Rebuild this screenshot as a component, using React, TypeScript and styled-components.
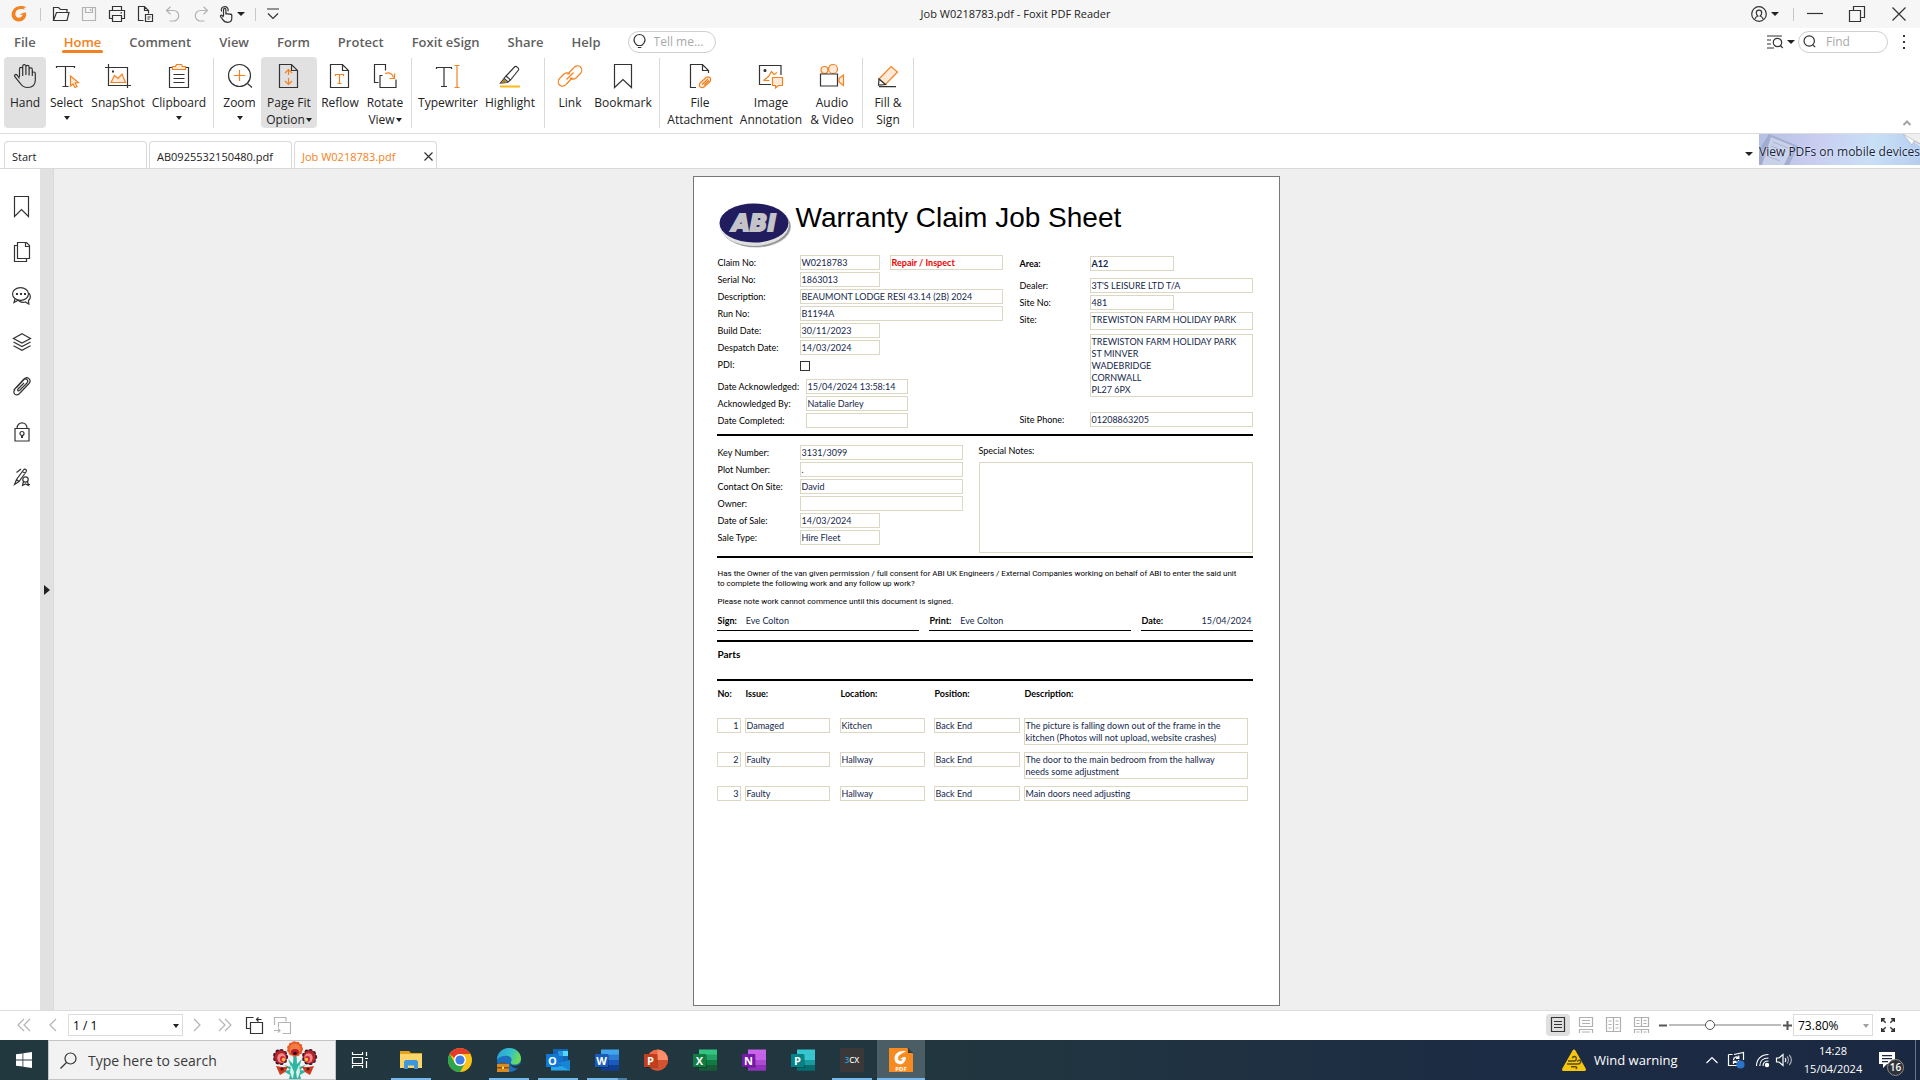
import React from "react";
import styled, { createGlobalStyle, css } from "styled-components";

const ORANGE = "#f58220";
const INK = "#333333";
const UI = '"Open Sans", "Noto Sans", sans-serif';
const DOC = 'Lato, "Open Sans", sans-serif';

const Global = createGlobalStyle`
  *, *::before, *::after { box-sizing: border-box; }
  html, body { margin: 0; padding: 0; }
  body { font-family: ${UI}; font-size: 11px; color: #222; background: #fff; }
  button, input, select { font: inherit; color: inherit; margin: 0; }
  button { border: 0; background: none; padding: 0; }
  dl, dd, dt, p, h1, h2, address { margin: 0; font-style: normal; }
`;

/* ---------- shared ---------- */

const Svg = styled.svg<{ $ink?: string }>`
  display: block;
  flex: none;
  overflow: visible;
  fill: none;
  stroke: ${(p) => p.$ink || INK};
  stroke-width: 1.2;
`;

type GlyphProps = { w: number; h?: number; children: React.ReactNode; color?: string };
const Glyph = ({ w, h = w, children, color }: GlyphProps) => (
  <Svg width={w} height={h} viewBox={`0 0 ${w} ${h}`} $ink={color} aria-hidden="true">
    {children}
  </Svg>
);

const Caret = styled.span<{ $tone?: string }>`
  display: inline-block;
  flex: none;
  border: 4px solid transparent;
  border-bottom: 0;
  border-top-color: ${(p) => p.$tone || "#222"};
`;

const Shell = styled.div`
  min-height: 100vh;
  display: flex;
  flex-direction: column;
`;

/* ---------- title bar ---------- */

const TitleBar = styled.header`
  height: 28px;
  display: flex;
  align-items: center;
  background: #f6f6f6;
`;
const QuickTools = styled.div`
  display: flex;
  align-items: center;
  padding-left: 7px;
`;
const LogoBox = styled.span`
  width: 24px;
  display: flex;
  justify-content: center;
`;
const ToolButton = styled.button<{ $w?: number }>`
  width: ${(p) => p.$w || 28}px;
  height: 28px;
  display: flex;
  align-items: center;
  justify-content: center;
  gap: 4px;
`;
const BarLine = styled.span<{ $m?: string }>`
  width: 1px;
  height: 13px;
  margin: ${(p) => p.$m || "0"};
  background: #c8c8c8;
`;
const WindowTitle = styled.h1`
  flex: 1;
  padding-bottom: 1px;
  text-align: center;
  font-size: 11px;
  font-weight: 400;
`;
const WindowTools = styled.div`
  display: flex;
  align-items: center;
`;

/* ---------- menu ---------- */

const MenuBar = styled.div`
  height: 29px;
  display: flex;
  align-items: center;
  padding-bottom: 2px;
`;
const Menu = styled.nav`
  display: flex;
  flex: 1;
  align-items: center;
`;
const MenuItem = styled.button<{ $on?: boolean }>`
  position: relative;
  height: 27px;
  padding: 0 14px;
  font-size: 13px;
  font-weight: 600;
  color: ${(p) => (p.$on ? ORANGE : "#5f5f5f")};
  ${(p) =>
    p.$on &&
    css`
      &::after {
        content: "";
        position: absolute;
        left: 12px;
        right: 12px;
        bottom: 2px;
        height: 3px;
        border-radius: 2px;
        background: ${ORANGE};
      }
    `}
`;
const Pill = styled.label<{ $w: number; $gap: number; $lead?: number }>`
  width: ${(p) => p.$w}px;
  height: 22px;
  margin-left: ${(p) => p.$lead || 0}px;
  display: flex;
  align-items: center;
  gap: ${(p) => p.$gap}px;
  padding: 0 4px;
  border: 1px solid #cfcfcf;
  border-radius: 11px;
  input {
    flex: 1;
    min-width: 0;
    height: 18px;
    padding: 0;
    border: 0;
    outline: 0;
    background: none;
    font-size: 12px;
  }
  input::placeholder {
    color: #a9a9a9;
  }
`;

/* ---------- ribbon ---------- */

const Ribbon = styled.div`
  display: flex;
  align-items: stretch;
  height: 77px;
  padding: 0 8px 5px 4px;
  border-bottom: 1px solid #dcdcdc;
`;
const RibbonButton = styled.button<{ $w: number; $on?: boolean }>`
  width: ${(p) => p.$w}px;
  display: flex;
  flex-direction: column;
  align-items: center;
  justify-content: flex-start;
  padding-top: 7px;
  border-radius: 4px;
  background: ${(p) => (p.$on ? "#e1e1e1" : "transparent")};
  line-height: 17px;
  font-size: 12px;
  white-space: nowrap;
  ${Svg} {
    margin-bottom: 6px;
  }
  ${Caret} {
    border-left-width: 3px;
    border-right-width: 3px;
    margin: 5px 0 0;
  }
`;
const InlineCaretLine = styled.span`
  display: flex;
  align-items: center;
  gap: 1px;
  ${Caret} {
    margin: 0;
  }
`;
const RibbonLine = styled.span`
  width: 1px;
  margin: 1px 4px 0;
  background: #d9d9d9;
`;
const Collapse = styled.button`
  margin: auto 0 0 auto;
  height: 12px;
`;

/* ---------- document tabs ---------- */

const TabStrip = styled.div`
  display: flex;
  align-items: flex-end;
  height: 35px;
  gap: 2px;
  padding-left: 4px;
  border-bottom: 1px solid #d9d9d9;
`;
const DocTab = styled.button<{ $on?: boolean }>`
  width: 143px;
  height: 27px;
  display: flex;
  align-items: center;
  justify-content: space-between;
  padding: 3px 3px 0 7px;
  border: 1px solid #d9d9d9;
  border-bottom: 0;
  border-radius: 4px 4px 0 0;
  color: ${(p) => (p.$on ? ORANGE : "#222")};
`;
const TabTail = styled.div`
  margin-left: auto;
  align-self: stretch;
  display: flex;
  align-items: center;
  gap: 6px;
`;
const Banner = styled.a`
  position: relative;
  width: 161px;
  height: 31px;
  margin-bottom: 3px;
  padding-top: 4px;
  display: flex;
  align-items: center;
  justify-content: center;
  overflow: hidden;
  background: linear-gradient(100deg, #b3c0e4 0%, #c9cdf0 35%, #c8e0f6 70%, #b7cdf0 100%);
  color: #15233d;
  font-size: 12px;
  text-decoration: none;
  white-space: nowrap;
  > svg {
    position: absolute;
    inset: 0;
  }
  > span {
    position: relative;
    text-shadow: 0 0 2px #fff;
  }
`;

/* ---------- workspace ---------- */

const Workspace = styled.div`
  flex: 1;
  display: flex;
`;
const SideRail = styled.aside`
  width: 40px;
  padding: 15px 0 0 3px;
  display: flex;
  flex-direction: column;
`;
const RailButton = styled.button`
  height: 45px;
  display: flex;
  align-items: center;
  justify-content: center;
`;
const PanelHandle = styled.button`
  width: 14px;
  display: flex;
  align-items: center;
  justify-content: center;
  background: #e1e1e1;
  border-right: 1px solid #dadada;
  span {
    border: 5px solid transparent;
    border-left: 6px solid #222;
    border-right: 0;
  }
`;
const Canvas = styled.main`
  flex: 1;
  display: flex;
  justify-content: center;
  padding: 7px 2px 4px 0;
  background: #efefef;
`;

/* ---------- PDF page ---------- */

const Paper = styled.article`
  width: 587px;
  min-height: 830px;
  padding: 23px 26px 0 23px;
  border: 1px solid #777;
  background: #fff;
  font-family: ${DOC};
  font-size: 9px;
  line-height: 12px;
  color: #000;
`;
const PaperHead = styled.div`
  display: flex;
  gap: 4px;
  height: 55px;
`;
const PaperTitle = styled.h2`
  font-family: "Liberation Sans", Arial, sans-serif;
  font-size: 28px;
  line-height: 36px;
  font-weight: 400;
`;
const Split = styled.div<{ $cols: string }>`
  display: grid;
  grid-template-columns: ${(p) => p.$cols};
  gap: 16px;
`;
const Rows = styled.dl<{ $top?: number }>`
  display: flex;
  flex-direction: column;
  gap: 2px;
  margin-top: ${(p) => p.$top || 0}px;
`;
const Row = styled.div<{ $label: number; $h?: number; $gap?: number }>`
  display: grid;
  grid-template-columns: ${(p) => p.$label}px 1fr;
  min-height: ${(p) => p.$h || 15}px;
  margin-bottom: ${(p) => p.$gap || 0}px;
  dt {
    padding: 2px 0 0 1px;
    white-space: nowrap;
  }
`;
const Values = styled.dd`
  display: flex;
  gap: 10px;
`;
const Box = styled.span<{ $w?: number; $h?: number; $end?: boolean; $pad?: number }>`
  display: block;
  ${(p) => (p.$w ? `width: ${p.$w}px;` : "flex: 1;")}
  min-height: ${(p) => p.$h || 15}px;
  padding: 1px ${(p) => p.$pad || 1}px 0 1px;
  border: 1px solid #dbd7c2;
  color: #14274a;
  text-align: ${(p) => (p.$end ? "right" : "left")};
`;
const Red = styled.strong`
  color: #f00000;
`;
const PdiCheck = styled.input`
  appearance: none;
  display: block;
  width: 10px;
  height: 10px;
  margin-top: 4px;
  border: 1px solid #333;
  background: #fff;
`;
const Rule = styled.hr<{ $top: number }>`
  height: 2px;
  margin: ${(p) => p.$top}px 0 0;
  border: 0;
  background: #000;
`;
const Consent = styled.div`
  padding: 11px 0 0 1px;
  font-family: Roboto, "Open Sans", sans-serif;
  font-size: 8px;
  line-height: 10px;
  p + p {
    margin-top: 8px;
  }
`;
const Signatures = styled.div`
  display: grid;
  grid-template-columns: 202px 202px 112px;
  gap: 10px;
  padding-top: 6px;
`;
const SignLine = styled.div<{ $spread?: boolean }>`
  display: flex;
  gap: 9px;
  justify-content: ${(p) => (p.$spread ? "space-between" : "flex-start")};
  height: 18px;
  padding: 0 1px;
  border-bottom: 1px solid #000;
  line-height: 15px;
  span {
    color: #14274a;
  }
`;
const PartsTitle = styled.h2`
  padding: 6px 0 0 1px;
  font-size: 10px;
  line-height: 13px;
`;
const PartsTable = styled.table`
  width: 535px;
  table-layout: fixed;
  border-spacing: 0;
  th {
    height: 37px;
    padding: 7px 0 0 1px;
    text-align: left;
    vertical-align: top;
    font-size: 9px;
  }
  td {
    padding: 0 0 7px;
    vertical-align: top;
  }
`;

/* ---------- status bar ---------- */

const StatusBar = styled.footer`
  height: 30px;
  display: flex;
  align-items: center;
  border-top: 1px solid #dcdcdc;
  background: #fff;
  padding: 0 18px 1px 10px;
`;
const StatusGroup = styled.div<{ $end?: boolean }>`
  display: flex;
  align-items: center;
  margin-left: ${(p) => (p.$end ? "auto" : "0")};
`;
const StatusButton = styled.button<{ $w: number; $on?: boolean }>`
  width: ${(p) => p.$w}px;
  height: 22px;
  display: flex;
  align-items: center;
  justify-content: center;
  border-radius: 4px;
  background: ${(p) => (p.$on ? "#dfdfdf" : "transparent")};
`;
const SelectWrap = styled.label<{ $w: number }>`
  position: relative;
  width: ${(p) => p.$w}px;
  height: 22px;
  select {
    appearance: none;
    width: 100%;
    height: 22px;
    padding: 0 4px;
    border: 1px solid #dcdcdc;
    border-radius: 0;
    background: #fff;
    font-size: 12px;
    color: #000;
  }
  ${Caret} {
    position: absolute;
    right: 4px;
    top: 10px;
    border-left-width: 3px;
    border-right-width: 3px;
  }
`;
const Slider = styled.input`
  appearance: none;
  width: 112px;
  height: 12px;
  background: linear-gradient(#bcbcbc, #bcbcbc) center / 100% 2px no-repeat;
  &::-webkit-slider-thumb {
    appearance: none;
    width: 10px;
    height: 10px;
    border: 1px solid #555;
    border-radius: 50%;
    background: #fff;
  }
`;

/* ---------- taskbar ---------- */

const TaskBar = styled.div`
  height: 40px;
  display: flex;
  background: linear-gradient(90deg, #22383f 0%, #21363f 50%, #1c2c44 78%, #1b2841 100%);
  color: #fff;
`;
const TaskButton = styled.button<{ $on?: boolean; $lead?: number }>`
  position: relative;
  width: 48px;
  margin-left: ${(p) => p.$lead || 0}px;
  display: flex;
  align-items: center;
  justify-content: center;
  background: ${(p) => (p.$on ? "#4b5e66" : "transparent")};
`;
const Running = styled.i<{ $full?: boolean; $multi?: boolean }>`
  position: absolute;
  bottom: 0;
  left: ${(p) => (p.$full ? 0 : 4)}px;
  right: ${(p) => (p.$full ? 0 : 4)}px;
  height: 2px;
  background: ${(p) =>
    p.$multi ? "linear-gradient(90deg, #76b9ed 31px, #4d7fa6 31px)" : "#76b9ed"};
`;
const SearchBox = styled.label`
  width: 288px;
  display: flex;
  align-items: center;
  gap: 11px;
  padding: 0 18px 0 11px;
  border: 1px solid #c4c4c4;
  background: #f2f2f2;
  input {
    flex: 1;
    min-width: 0;
    border: 0;
    outline: 0;
    padding: 0;
    background: none;
    font-size: 14px;
  }
  input::placeholder {
    color: #3a3a3a;
  }
`;
const Tray = styled.div`
  margin-left: auto;
  display: flex;
  align-items: center;
  padding-right: 4px;
`;
const Weather = styled.button`
  display: flex;
  align-items: center;
  gap: 8px;
  width: 144px;
  height: 40px;
  font-size: 13px;
  color: #fff;
  white-space: nowrap;
`;
const TrayButton = styled.button<{ $w: number }>`
  width: ${(p) => p.$w}px;
  height: 40px;
  display: flex;
  align-items: center;
  justify-content: center;
  color: #fff;
`;
const Clock = styled.button`
  width: 70px;
  color: #fff;
  line-height: 18px;
  text-align: center;
`;
const Notice = styled.button`
  position: relative;
  width: 48px;
  height: 40px;
  padding-left: 11px;
  border-right: 1px solid #6d7588;
`;
const Badge = styled.span`
  position: absolute;
  left: 19px;
  top: 19px;
  width: 17px;
  height: 17px;
  border: 1px solid #8d8d8d;
  border-radius: 50%;
  background: #2f3338;
  color: #fff;
  font-size: 10px;
  font-weight: 600;
  line-height: 15px;
  text-align: center;
`;

/* ---------- drawings ---------- */

const NoStroke = styled(Svg)`
  stroke: none;
  stroke-width: 0;
`;

const FoxitMark = () => (
  <NoStroke width="16" height="16" viewBox="0 0 16 16" aria-hidden="true">
    <path
      fill={ORANGE}
      d="M15.5 1.2C11.5-.6 5.600-.6 2.500 3.200c-3 3.600-2.200 9 1.500 11.300 4 2.400 9.200.5 10.800-3.700.5-1.500.5-3 .1-4.300-2.200.4-4.600.6-6 2.300 1.100-.2 1.900-.1 2.800 0-.9 2.700-3.600 3.700-5.700 2.400-2-1.300-2.200-4.200-.7-6.200C7.200 2.400 11.600 2.800 14.200 3.600 13.700 3 13 2.500 12.300 2.100c1.100-.4 2.200-.6 3.200-.9z"
    />
  </NoStroke>
);

const PageOutline = <path d="M2.500 .5h12l6 6v17h-18zM14.500 .5v6h6" />;

const icons = {
  open: (
    <Glyph w={18} h={16}>
      <path d="M1.500 14.500V1.500h5l2 2h6.500v3M1.500 14.500l3-8h12.500l-2 8z" />
    </Glyph>
  ),
  save: (
    <Glyph w={16} color="#b3b3b3">
      <path d="M1.500 1.500h13v13h-13zM4.500 1.500v5h7v-5M9.500 3v2" />
    </Glyph>
  ),
  print: (
    <Glyph w={18} h={16}>
      <path d="M4.500 4.500v-4h9v4M4.500 12.500h-3v-8h15v8h-3M4.500 9.500h9v6h-9zM12.500 6.800h1.500" />
    </Glyph>
  ),
  convert: (
    <Glyph w={18} h={17}>
      <path d="M7.500 14.500h-5v-14h6l4 4v3M8.500 .5v4h4M9.500 8.500h7v7h-7zM11.500 11h3M11.500 13h2" />
    </Glyph>
  ),
  undo: (
    <Glyph w={16} color="#b3b3b3">
      <path d="M5.500 .8l-4 3.700 4 3.700M1.500 4.500h7a5 5 0 0 1 0 10.500h-4" />
    </Glyph>
  ),
  redo: (
    <Glyph w={16} color="#b3b3b3">
      <path d="M10.500 .8l4 3.700-4 3.700M14.500 4.500h-7a5 5 0 0 0 0 10.500h4" />
    </Glyph>
  ),
  touch: (
    <Glyph w={14} h={17}>
      <path d="M4.500 10V3.500a1.200 1.200 0 0 1 2.400 0V8.500c0-1.500 2.200-1.300 2.200.2 0-1.400 2-1.200 2 .3 0-1.200 1.700-1 1.700.3v3c0 2.500-1.300 4-4 4-2.800 0-4-1-5-2.700L1.500 10.500c-.4-1.200.8-1.700 1.600-1L4.500 11M2.700 5.500C1.300 2.500 3.500.7 5.700.7s4.200 1.700 3.200 4.500" />
    </Glyph>
  ),
  customize: (
    <Glyph w={14} h={12}>
      <path d="M1 1h12M2 5.500l5 5 5-5" />
    </Glyph>
  ),
  user: (
    <Glyph w={16}>
      <circle cx="8" cy="8" r="7.300" />
      <path d="M4 13c.3-2 1.500-2.500 2.800-3-1-.8-1.500-2-1.500-3.200C5.300 5.200 6.400 4.200 8 4.200s2.700 1 2.700 2.600c0 1.300-.5 2.400-1.500 3.200 1.300.5 2.500 1 2.800 3" />
    </Glyph>
  ),
  minimise: (
    <Glyph w={16}>
      <path d="M0 7.500h16" />
    </Glyph>
  ),
  restore: (
    <Glyph w={16}>
      <path d="M.5 4.500h11v11h-11zM4.500 4.500v-4h11v11h-4" />
    </Glyph>
  ),
  close: (
    <Glyph w={14}>
      <path d="M.5.5l13 13M13.500.5l-13 13" />
    </Glyph>
  ),
  bulb: (
    <Glyph w={13} h={15}>
      <path d="M4.500 11.500C2.500 10 1 8.500 1 6a5.500 5.500 0 0 1 11 0c0 2.500-1.500 4-3.500 5.500zM4.800 13.500h3.500" />
    </Glyph>
  ),
  magnifier: (
    <Glyph w={13}>
      <circle cx="6.200" cy="6" r="5.200" />
      <path d="M9.800 9.800l2.400 2.400" />
    </Glyph>
  ),
  listSearch: (
    <Glyph w={16} h={14}>
      <path d="M0 1h15M0 5h4M0 9h4M0 13h7" />
      <circle cx="10.500" cy="7.500" r="4.200" />
      <path d="M13.500 10.500l2.200 2.500" />
    </Glyph>
  ),
};

const O = { stroke: ORANGE };
const OF = { stroke: ORANGE, fill: "#fdeadb" };

const ribbonIcons = {
  hand: (
    <Glyph w={24}>
      <path d="M6.500 13V5a1.600 1.600 0 0 1 3.200 0v7M9.700 5V2.200a1.600 1.600 0 0 1 3.200 0V11M12.900 3a1.600 1.600 0 0 1 3.200 0v8.500M16.100 5.500a1.600 1.600 0 0 1 3.200 0V12M19.300 9.500c0-2 3-2 3 0V16c0 4.800-2.500 7.500-7.500 7.500-4.200 0-6-1.300-7.800-4.500L1.700 12.500c-.8-1.600 1-2.800 2.300-1.500l2.500 3.500" />
    </Glyph>
  ),
  select: (
    <Glyph w={24}>
      <path d="M1.500 4V2.500h18V4M10.500 2.500v20M7.500 22.500h6" />
      <path {...OF} d="M15.500 12v10l2.500-2 2 3.500 2-1-1.800-3.500 3.300-.5z" />
    </Glyph>
  ),
  snapshot: (
    <Glyph w={26} h={24}>
      <path d="M3.500 0v21.500H26M0 3.500h22.500V24" />
      <path {...OF} d="M6 18.500l3.500-7 3.500 3 4-4.500 3.500 8.500z" />
      <path d="M7 7.500h2" strokeWidth="2" />
    </Glyph>
  ),
  clipboard: (
    <Glyph w={24}>
      <path d="M5.500 3.500h-3v20h19v-20h-3M6.500 10.500h11M6.500 14.500h11M6.500 18.500h11" />
      <path {...OF} d="M5.500 2.500h3l1-2h5l1 2h3v3h-13z" />
    </Glyph>
  ),
  zoom: (
    <Glyph w={24}>
      <circle cx="11.500" cy="11.500" r="11" />
      <path d="M19.500 19.500l4.500 4" />
      <path {...O} d="M11.500 6v11M6 11.500h11" />
    </Glyph>
  ),
  pageFit: (
    <Glyph w={24}>
      {PageOutline}
      <path {...O} d="M11.500 6v5M11.500 14v6M8 9l3.500-3.500L15 9M8 17l3.500 3.500L15 17" />
    </Glyph>
  ),
  reflow: (
    <Glyph w={24}>
      {PageOutline}
      <path {...O} d="M7.500 12v-1.500h8V12M11.500 10.500v9M9.500 19.500h4" />
    </Glyph>
  ),
  rotate: (
    <Glyph w={24}>
      <path d="M5.500 18.500h-4V.5h11v6M9.500 11.500h-2.500v12h16v-8" />
      <path {...O} d="M12 9.500c4-1.500 7 0 8.500 4M21.500 9.500v5h-5" />
    </Glyph>
  ),
  typewriter: (
    <Glyph w={24}>
      <path d="M.5 5V3.500h15V5M8 3.500v19M5 22.500h6" />
      <path {...O} d="M18.500 1.500h5M18.500 23.500h5M21 1.500v22" />
    </Glyph>
  ),
  highlight: (
    <Glyph w={24}>
      <path d="M8 12L17 2.500c1-.8 4.500 2 3.500 3.500L12.500 16M8 12l4.500 4-2.500 2-4-3.500zM6 14.500L2.500 19l7-.5" />
      <path stroke="none" fill="#b07a1c" d="M2.500 19l3.500-3.500 3 2.700z" />
      <path stroke="#fdb813" strokeWidth="2" d="M2 22.500h20" />
    </Glyph>
  ),
  link: (
    <Glyph w={24} color={ORANGE}>
      <path d="M9.500 10.500l6-6.500c2-2.500 5-3 7-1s1.500 5-.5 7l-4 4c-2 1.500-4 1.500-6 0M14.500 13.500l-6 6.500c-2 2.500-5 3-7 1s-1.500-5 .5-7l4-4c2-1.500 4-1.500 6 0" />
      <path d="M8.500 15.500l7-7" />
    </Glyph>
  ),
  bookmark: (
    <Glyph w={24}>
      <path d="M3.500 .5h17v23l-8.500-8-8.500 8z" />
    </Glyph>
  ),
  attachment: (
    <Glyph w={24}>
      <path d="M8 23.500H2.500V.5h12l6 6V9M14.500 .5v6h6" />
      <path {...OF} d="M12 19l6-5.500c3-2 6 1 4 4L16 23c-3 2-6-1-4-4zM14 20.500l6-5.500M16 21l5-4.500" />
    </Glyph>
  ),
  image: (
    <Glyph w={24}>
      <path d="M12 20.500H.5v-19h21.500V11" />
      <circle cx="6" cy="6.500" r="1" fill={INK} />
      <path {...O} d="M4.500 16.500l5-4 3-5 2.500 3 3-2M4.500 16.500h6" />
      <path {...OF} d="M13.500 13.500h10v8h-4l-3 2.500v-2.500h-3z" />
    </Glyph>
  ),
  video: (
    <Glyph w={24}>
      <circle {...OF} cx="4.500" cy="6" r="3.500" />
      <circle {...OF} cx="13" cy="5" r="4.500" />
      <path fill="#fff" d="M.5 10h17v12H.5z" />
      <path {...OF} d="M19 14.500l4.500-3.500v10.500L19 18z" />
    </Glyph>
  ),
  sign: (
    <Glyph w={24}>
      <path {...OF} d="M3 15L15 2.500 21.500 8 9.500 20.500z" />
      <path d="M3 15l-.5 6 7-.5zM3 22.700h17" />
    </Glyph>
  ),
};

const railIcons: [string, React.ReactNode][] = [
  ["Bookmarks", <Glyph w={18} h={22}><path d="M1.500 .5h14v20l-7-7-7 7z" /></Glyph>],
  ["Pages", <Glyph w={18} h={20}><path d="M4.500 3.500h-3v16h12v-3M4.500 .5h9l3 3v13h-12zM12.500 .5v4h4" /></Glyph>],
  ["Comments", (
    <Glyph w={20} h={20}>
      <ellipse cx="8.500" cy="7" rx="8" ry="6.300" />
      <path d="M3 12l-1 3.500L6.500 13M17 6c2 3 1.300 6-.5 7.500l.3 3.500-3.300-2c-3 .8-5.500 0-7-1.500" />
      <path strokeWidth="1.800" d="M4 7h2M8 7h2M12 7h2" />
    </Glyph>
  )],
  ["Layers", <Glyph w={18} h={18}><path d="M9 .7l8.500 4.800L9 10 .5 5.500zM.5 9L9 13.500 17.500 9M.5 12.700L9 17.300l8.500-4.600" /></Glyph>],
  ["Attachments", <Glyph w={18} h={19}><path d="M3.500 10.500l7-7.500c3-2.500 5.500.5 3.500 3L6.500 13.500c-1.500 1-2.500-.5-1.500-1.500L11 6M.8 13L11 2c3.500-3.500 8 1 5 4.500L6.500 16.500c-3.500 3.500-7.500-.5-4.500-4" /></Glyph>],
  ["Security", (
    <Glyph w={16} h={20}>
      <path d="M1 6.500h14v12.500H1zM3 6.500c0-7.500 10-7.500 10 0" />
      <circle cx="8" cy="11.500" r="2" />
      <path d="M8 13.500v2.500" strokeWidth="2" />
    </Glyph>
  )],
  ["Signatures", (
    <Glyph w={18} h={16}>
      <path d="M1.500 15.500l2-5 7-9.500c1.500-2 4 0 2.500 2L6 12.500zM3.500 10.500L6 12.500M3.500 3.500L8 0M9.500 2.500l3 2" />
      <circle cx="12.500" cy="10.500" r="2.700" />
      <path d="M10.500 12.500l-1 4 3-1.500 3 1.500-1-4M14 15.500h3" />
    </Glyph>
  )],
];

const AbiLogo = () => (
  <Svg width="75" height="48" viewBox="0 0 75 48" role="img" aria-label="ABI">
    <defs>
      <linearGradient id="rim" x1="0" y1="0" x2="0" y2="1">
        <stop offset="0" stopColor="#fafafa" />
        <stop offset="1" stopColor="#dedede" />
      </linearGradient>
    </defs>
    <g stroke="none">
      <ellipse cx="39" cy="27" rx="35" ry="20.500" fill="#c4c4c4" />
      <ellipse cx="38.500" cy="26" rx="35" ry="21" fill="#949494" />
      <ellipse cx="37" cy="24.500" rx="35" ry="21.500" fill="url(#rim)" />
      <ellipse cx="37" cy="23" rx="34.500" ry="19.500" fill="#201c5e" />
    </g>
    <text
      x="37"
      y="31"
      textAnchor="middle"
      fill="#c3c3c8"
      stroke="#c3c3c8"
      strokeWidth="2"
      fontFamily="DejaVu Sans, sans-serif"
      fontSize="23"
      fontWeight="700"
      fontStyle="italic"
    >
      ABI
    </text>
  </Svg>
);

const OfficeTile = ({ letter, tile, shades, round }: { letter: string; tile: string; shades: string[]; round?: boolean }) => (
  <NoStroke width="24" height="24" viewBox="0 0 24 24" aria-hidden="true">
    {round ? (
      <>
        <circle cx="13.500" cy="12" r="10.500" fill={shades[0]} />
        <path d="M13.500 1.500A10.500 10.500 0 0 1 24 12H13.500z" fill={shades[1]} />
        <path d="M3 12h21a10.500 10.500 0 0 1-21 0z" fill={shades[2]} />
      </>
    ) : (
      shades.map((c, i) => (
        <rect key={i} x="6" y={1.500 + i * (21 / shades.length)} width="18" height={21 / shades.length + 0.2} fill={c} />
      ))
    )}
    <rect x="1" y="7" width="13" height="13" fill="#000" opacity=".2" />
    <rect x="0" y="6" width="13" height="13" fill={tile} />
    <text x="6.500" y="16.500" textAnchor="middle" fill="#fff" fontFamily="Open Sans, sans-serif" fontWeight="700" fontSize="11">
      {letter}
    </text>
  </NoStroke>
);

const FolderIcon = () => (
  <NoStroke width="24" height="20" viewBox="0 0 24 20">
    <path fill="#e3a21a" d="M1 1h9l2 2h11v4H1z" />
    <path fill="#fbd568" d="M1 4h22v14H1z" />
    <path fill="#3d97dd" d="M5 19v-7.500L6.500 10h11l1.500 1.500V19h-4v-3.500H9V19z" />
  </NoStroke>
);
const ChromeIcon = () => (
  <NoStroke width="24" height="24" viewBox="0 0 24 24">
    <circle cx="12" cy="12" r="12" fill="#fbc116" />
    <path fill="#e33b2e" d="M1.600 6A12 12 0 0 1 22.400 6H12a6 6 0 0 0-5.500 4z" />
    <path fill="#2da44e" d="M1.600 6A12 12 0 0 0 12 24l5.200-9A6 6 0 0 1 6.800 15z" />
    <circle cx="12" cy="12" r="6" fill="#fff" />
    <circle cx="12" cy="12" r="4.600" fill="#3f7de8" />
  </NoStroke>
);
const EdgeIcon = () => (
  <NoStroke width="24" height="24" viewBox="0 0 24 24">
    <defs>
      <linearGradient id="edgeTop" x1="0" y1="0" x2="1" y2=".3">
        <stop offset="0" stopColor="#2a9fd8" />
        <stop offset=".6" stopColor="#35c1c9" />
        <stop offset="1" stopColor="#6bdc5a" />
      </linearGradient>
    </defs>
    <circle cx="12" cy="12" r="12" fill="#1b6fbf" />
    <path fill="url(#edgeTop)" d="M0 12C0 5 5 0 12 0s12 5 12 10.500c0 4-3 6-6.500 6-3 0-4.500-1.200-3.500-2.700 1.500-2.500 0-6-4.500-6C5 7.800 1 9.500 0 12z" />
    <path fill="#22383f" d="M13 14c0 3 3 4 7 3.500l4-2v-2l1 6-5 1c-4 0-7.500-3-7-6.500z" />
    <rect x="0" y="16" width="12" height="8" fill="#d98a1f" />
    <path fill="#8c4f10" d="M0 19h12v1.500H0zM3.500 14h5v2h-1.200v-1H4.700v1H3.500z" />
    <rect x="5" y="18.500" width="2" height="2.500" fill="#ffd84d" />
  </NoStroke>
);
const OutlookIcon = () => (
  <NoStroke width="24" height="24" viewBox="0 0 24 24">
    <rect x="7" y="1" width="15" height="15" fill="#1066b5" />
    <rect x="12" y="3" width="5" height="5" fill="#2b95e0" />
    <rect x="17" y="3" width="5" height="5" fill="#50d9ff" />
    <rect x="12" y="8" width="5" height="5" fill="#1073c9" />
    <path fill="#28a8ea" d="M5 12l9.500 6 9.500-6v10.500H5z" />
    <path fill="#1784d6" d="M24 12v10.500L10 15z" />
    <rect x="0" y="6" width="13" height="13" fill="#0f78d4" />
    <text x="6.500" y="16.500" textAnchor="middle" fill="#fff" fontFamily="Open Sans, sans-serif" fontWeight="700" fontSize="11">
      O
    </text>
  </NoStroke>
);
const ThreeCx = () => (
  <NoStroke width="24" height="24" viewBox="0 0 24 24">
    <rect width="24" height="24" fill="#3a3838" />
    <text x="12" y="15" textAnchor="middle" fontFamily="Open Sans, sans-serif" fontWeight="600" fontSize="8" fill="#eee">
      <tspan fill="#1f9bd7">3</tspan>CX
    </text>
  </NoStroke>
);
const FoxitTile = () => (
  <NoStroke width="24" height="24" viewBox="0 0 24 24">
    <path fill="#f78b1f" d="M0 0h18l6 6v18H0z" />
    <path fill="#333b40" d="M19 0l5 5h-5z" />
    <path fill="#fff" d="M17 3.500C11 2 5.500 5 5.500 10.500S12 18 15 14.500c1.600-1.700 2-3.500 1.700-5.500-2.500 0-4.200.6-5.700 2.200h2.800c-1.300 2.600-4.700 2-4.700-1C9.100 7 12.500 5.600 17 3.500z" />
    <text x="12" y="22.500" textAnchor="middle" fontFamily="Open Sans, sans-serif" fontWeight="700" fontSize="6" fill="#fff">
      PDF
    </text>
  </NoStroke>
);
const StartLogo = () => (
  <NoStroke width="16" height="16" viewBox="0 0 16 16">
    <path fill="#fff" d="M0 2.300L6.500 1.400v6.200H0zM7.300 1.300L16 0v7.600H7.300zM0 8.400h6.500v6.200L0 13.700zM7.300 8.400H16V16l-8.700-1.300z" />
  </NoStroke>
);

const sidePetals = Array.from({ length: 9 }, (_, k) => (k * 2 * Math.PI) / 9);
const crownPetals = Array.from({ length: 11 }, (_, k) => (k * 2 * Math.PI) / 11);
const FolkFlowers = () => (
  <NoStroke width="44" height="38" viewBox="0 0 44 38">
    <path fill="#2fb5a4" d="M20.500 14h3l.5 9 5-5-3 8 7-2-6 5 7 1-7 4 1 4H16l1-4-7-4 7-1-6-5 7 2-3-8 5 5z" />
    <path fill="#d8f0e6" d="M18 24l3 7-1 6h-1l-2-6zM26 24l-3 7 1 6h1l2-6z" />
    {[7.5, 36.5].map((cx) => (
      <g key={cx}>
        {sidePetals.map((a) => (
          <circle key={a} cx={cx + 5.500 * Math.cos(a)} cy={16 + 6 * Math.sin(a)} r="2.200" fill="#3a1320" />
        ))}
        <ellipse cx={cx} cy="16" rx="6.200" ry="6.800" fill="#b3242e" />
        <ellipse cx={cx < 22 ? cx + 1 : cx - 1} cy="17" rx="4.200" ry="4.800" fill="#ee8b86" />
        <ellipse cx={cx < 22 ? cx + 2 : cx - 2} cy="18" rx="2.500" ry="3" fill="#d8233a" />
        <circle cx={cx < 22 ? cx + 3 : cx - 3} cy="18.500" r="1.700" fill="#f6c12b" />
      </g>
    ))}
    <path fill="#d23a1e" d="M3 25l6 1 6 0-3 5-5 3zM41 25l-6 1-6 0 3 5 5 3z" />
    <circle cx="9" cy="28" r="1.600" fill="#4a1616" />
    <circle cx="35" cy="28" r="1.600" fill="#4a1616" />
    {crownPetals.map((a) => (
      <circle key={a} cx={22 + 5.800 * Math.cos(a)} cy={8 + 5.500 * Math.sin(a)} r="2.300" fill="#e85a28" />
    ))}
    <circle cx="22" cy="8" r="5.500" fill="#f47b42" />
    <ellipse cx="22" cy="11" rx="4" ry="3" fill="#b3202a" />
    <circle cx="22" cy="12.500" r="1.800" fill="#2a1220" />
  </NoStroke>
);

/* ---------- data ---------- */

type RibbonItem = { id: keyof typeof ribbonIcons; w: number; lines: string[]; caret?: "below" | "inline"; on?: boolean };
const ribbonGroups: RibbonItem[][] = [
  [
    { id: "hand", w: 42, lines: ["Hand"], on: true },
    { id: "select", w: 41, lines: ["Select"], caret: "below" },
    { id: "snapshot", w: 62, lines: ["SnapShot"] },
    { id: "clipboard", w: 60, lines: ["Clipboard"], caret: "below" },
  ],
  [
    { id: "zoom", w: 43, lines: ["Zoom"], caret: "below" },
    { id: "pageFit", w: 56, lines: ["Page Fit", "Option"], caret: "inline", on: true },
    { id: "reflow", w: 46, lines: ["Reflow"] },
    { id: "rotate", w: 44, lines: ["Rotate", "View"], caret: "inline" },
  ],
  [
    { id: "typewriter", w: 64, lines: ["Typewriter"] },
    { id: "highlight", w: 60, lines: ["Highlight"] },
  ],
  [
    { id: "link", w: 42, lines: ["Link"] },
    { id: "bookmark", w: 64, lines: ["Bookmark"] },
  ],
  [
    { id: "attachment", w: 72, lines: ["File", "Attachment"] },
    { id: "image", w: 70, lines: ["Image", "Annotation"] },
    { id: "video", w: 52, lines: ["Audio", "& Video"] },
  ],
  [{ id: "sign", w: 42, lines: ["Fill &", "Sign"] }],
];

const parts = [
  ["1", "Damaged", "Kitchen", "Back End", "The picture is falling down out of the frame in the kitchen (Photos will not upload, website crashes)"],
  ["2", "Faulty", "Hallway", "Back End", "The door to the main bedroom from the hallway needs some adjustment"],
  ["3", "Faulty", "Hallway", "Back End", "Main doors need adjusting"],
];

const Field = ({ label, value, w, lw = 83, gap, h, strong }: { label: string; value: React.ReactNode; w?: number; lw?: number; gap?: number; h?: number; strong?: boolean }) => (
  <Row $label={lw} $gap={gap} $h={h}>
    <dt>{strong ? <strong>{label}</strong> : label}</dt>
    <Values>
      <Box $w={w} $h={h}>{strong ? <strong>{value}</strong> : value}</Box>
    </Values>
  </Row>
);

const RibbonCell = ({ item }: { item: RibbonItem }) => (
  <RibbonButton $w={item.w} $on={item.on}>
    {ribbonIcons[item.id]}
    {item.lines.map((line, i) =>
      item.caret === "inline" && i === 1 ? (
        <InlineCaretLine key={line}>
          {line}
          <Caret />
        </InlineCaretLine>
      ) : (
        <span key={line}>{line}</span>
      )
    )}
    {item.caret === "below" && <Caret />}
  </RibbonButton>
);

const Arrows = ({ double, right }: { double?: boolean; right?: boolean }) => (
  <Glyph w={double ? 14 : 8} h={14} color="#b5b5b5">
    <path d={right ? "M1 1l6 6-6 6" : "M7 1L1 7l6 6"} />
    {double && <path d={right ? "M7 1l6 6-6 6" : "M13 1L7 7l6 6"} />}
  </Glyph>
);

const JobSheet = () => (
  <Paper>
    <PaperHead>
      <AbiLogo />
      <PaperTitle>Warranty Claim Job Sheet</PaperTitle>
    </PaperHead>

    <Split $cols="286px 1fr">
      <Rows>
        <Row $label={83}>
          <dt>Claim No:</dt>
          <Values>
            <Box $w={80}>W0218783</Box>
            <Box><Red>Repair / Inspect</Red></Box>
          </Values>
        </Row>
        <Field label="Serial No:" value="1863013" w={80} />
        <Field label="Description:" value="BEAUMONT LODGE RESI 43.14 (2B) 2024" />
        <Field label="Run No:" value="B1194A" />
        <Field label="Build Date:" value="30/11/2023" w={80} />
        <Field label="Despatch Date:" value="14/03/2024" w={80} />
        <Row $label={83} $gap={5}>
          <dt><label htmlFor="pdi">PDI:</label></dt>
          <dd><PdiCheck id="pdi" type="checkbox" /></dd>
        </Row>
        <Field lw={89} label="Date Acknowledged:" value="15/04/2024 13:58:14" w={102} />
        <Field lw={89} label="Acknowledged By:" value="Natalie Darley" w={102} />
        <Field lw={89} label="Date Completed:" value="" w={102} />
      </Rows>
      <Rows $top={1}>
        <Field lw={71} label="Area:" value="A12" w={84} gap={5} strong />
        <Field lw={71} label="Dealer:" value="3T'S LEISURE LTD T/A" />
        <Field lw={71} label="Site No:" value="481" w={84} />
        <Field lw={71} label="Site:" value="TREWISTON FARM HOLIDAY PARK" h={18} gap={2} />
        <Row $label={71} $gap={13}>
          <dt />
          <Values>
            <Box $h={63}>
              <address>
                TREWISTON FARM HOLIDAY PARK<br />ST MINVER<br />WADEBRIDGE<br />CORNWALL<br />PL27 6PX
              </address>
            </Box>
          </Values>
        </Row>
        <Field lw={71} label="Site Phone:" value="01208863205" />
      </Rows>
    </Split>

    <Rule $top={6} />
    <Split $cols="246px 1fr">
      <Rows $top={9}>
        <Field label="Key Number:" value="3131/3099" />
        <Field label="Plot Number:" value="." />
        <Field label="Contact On Site:" value="David" />
        <Field label="Owner:" value="" />
        <Field label="Date of Sale:" value="14/03/2024" w={80} />
        <Field label="Sale Type:" value="Hire Fleet" w={80} />
      </Rows>
      <Rows $top={9}>
        <Row as="dt" $label={200}>
          <span>Special Notes:</span>
        </Row>
        <Values><Box $h={91} /></Values>
      </Rows>
    </Split>

    <Rule $top={3} />
    <Consent>
      <p>
        Has the Owner of the van given permission / full consent for ABI UK Engineers / External Companies working on behalf of ABI to enter the said unit<br />
        to complete the following work and any follow up work?
      </p>
      <p>Please note work cannot commence until this document is signed.</p>
    </Consent>
    <Signatures>
      <SignLine><strong>Sign:</strong><span>Eve Colton</span></SignLine>
      <SignLine><strong>Print:</strong><span>Eve Colton</span></SignLine>
      <SignLine $spread><strong>Date:</strong><span>15/04/2024</span></SignLine>
    </Signatures>
    <Rule $top={9} />
    <PartsTitle>Parts</PartsTitle>
    <Rule $top={18} />
    <PartsTable>
      <colgroup>
        <col width="28" />
        <col width="95" />
        <col width="94" />
        <col width="90" />
        <col />
      </colgroup>
      <thead>
        <tr><th>No:</th><th>Issue:</th><th>Location:</th><th>Position:</th><th>Description:</th></tr>
      </thead>
      <tbody>
        {parts.map(([no, issue, location, position, description]) => (
          <tr key={no}>
            <td><Box $w={24} $end>{no}</Box></td>
            <td><Box $w={85}>{issue}</Box></td>
            <td><Box $w={85}>{location}</Box></td>
            <td><Box $w={86}>{position}</Box></td>
            <td><Box $w={224} $pad={10}>{description}</Box></td>
          </tr>
        ))}
      </tbody>
    </PartsTable>
  </Paper>
);

export default function App() {
  return (
    <Shell>
      <Global />
      <TitleBar>
        <QuickTools>
          <LogoBox><FoxitMark /></LogoBox>
          <BarLine $m="0 6px 0 9px" />
          <ToolButton aria-label="Open">{icons.open}</ToolButton>
          <ToolButton aria-label="Save">{icons.save}</ToolButton>
          <ToolButton aria-label="Print">{icons.print}</ToolButton>
          <ToolButton aria-label="Convert">{icons.convert}</ToolButton>
          <ToolButton aria-label="Undo">{icons.undo}</ToolButton>
          <ToolButton aria-label="Redo">{icons.redo}</ToolButton>
          <ToolButton $w={34} aria-label="Touch mode">{icons.touch}<Caret /></ToolButton>
          <BarLine $m="0 3px 0 6px" />
          <ToolButton aria-label="Customise toolbar">{icons.customize}</ToolButton>
        </QuickTools>
        <WindowTitle>Job W0218783.pdf - Foxit PDF Reader</WindowTitle>
        <WindowTools>
          <ToolButton $w={42} aria-label="Account">{icons.user}<Caret /></ToolButton>
          <BarLine $m="0 0 0 7px" />
          <ToolButton $w={42} aria-label="Minimise">{icons.minimise}</ToolButton>
          <ToolButton $w={42} aria-label="Restore">{icons.restore}</ToolButton>
          <ToolButton $w={42} aria-label="Close">{icons.close}</ToolButton>
        </WindowTools>
      </TitleBar>

      <MenuBar>
        <Menu>
          {["File", "Home", "Comment", "View", "Form", "Protect", "Foxit eSign", "Share", "Help"].map((m) => (
            <MenuItem key={m} $on={m === "Home"}>{m}</MenuItem>
          ))}
          <Pill $w={88} $gap={8} $lead={13}>
            {icons.bulb}
            <input aria-label="Tell me" placeholder="Tell me..." />
          </Pill>
        </Menu>
        <ToolButton $w={34} aria-label="Advanced search">{icons.listSearch}<Caret /></ToolButton>
        <Pill $w={90} $gap={10}>
          {icons.magnifier}
          <input aria-label="Find" placeholder="Find" />
        </Pill>
        <ToolButton $w={32} aria-label="More">
          <Glyph w={4} h={16}><path strokeWidth="2" d="M2 1v2M2 7v2M2 13v2" /></Glyph>
        </ToolButton>
      </MenuBar>

      <Ribbon>
        {ribbonGroups.map((group, i) => (
          <React.Fragment key={i}>
            {group.map((item) => <RibbonCell key={item.id} item={item} />)}
            <RibbonLine />
          </React.Fragment>
        ))}
        <Collapse aria-label="Collapse ribbon">
          <Glyph w={10} h={7} color="#a3a3a3"><path strokeWidth="2" d="M1.500 6L5 2.500 8.500 6" /></Glyph>
        </Collapse>
      </Ribbon>

      <TabStrip>
        <DocTab>Start</DocTab>
        <DocTab>AB0925532150480.pdf</DocTab>
        <DocTab $on>
          Job W0218783.pdf
          <Glyph w={9}><path d="M.5.5l8 8M8.500.5l-8 8" /></Glyph>
        </DocTab>
        <TabTail>
          <button aria-label="All tabs"><Caret /></button>
          <Banner href="#">
            <svg width="161" height="31" viewBox="0 0 161 31" aria-hidden="true">
              <path fill="#99a4c6" d="M10 0l29 12-9 19H0V16z" opacity=".75" />
              <path fill="#d3daf0" d="M12 3l22 9-9 19H3z" opacity=".8" />
              <path stroke="#a9b3d3" d="M14 8l15 6M12 12l15 6M10 17l15 6M8 22l13 5" />
              <path fill="#efefef" d="M143 0h18v12z" />
              <path fill="#fff" stroke="#9fa9bd" strokeWidth=".6" d="M144 0l9 11 2-4 6 3z" />
            </svg>
            <span>View PDFs on mobile devices</span>
          </Banner>
        </TabTail>
      </TabStrip>

      <Workspace>
        <SideRail>
          {railIcons.map(([name, icon]) => <RailButton key={name} aria-label={name}>{icon}</RailButton>)}
        </SideRail>
        <PanelHandle aria-label="Expand panel"><span /></PanelHandle>
        <Canvas><JobSheet /></Canvas>
      </Workspace>

      <StatusBar>
        <StatusGroup>
          <StatusButton $w={28} aria-label="First page"><Arrows double /></StatusButton>
          <StatusButton $w={30} aria-label="Previous page"><Arrows /></StatusButton>
          <SelectWrap $w={115}>
            <select aria-label="Page"><option>1 / 1</option></select>
            <Caret />
          </SelectWrap>
          <StatusButton $w={28} aria-label="Next page"><Arrows right /></StatusButton>
          <StatusButton $w={28} aria-label="Last page"><Arrows double right /></StatusButton>
          <StatusButton $w={30} aria-label="Previous view">
            <Glyph w={17}><path d="M4 11.500H.5V.5h7M4.500 5.500h12v11h-12zM15.500 2.500h-5M12.500 .500L10.500 2.500l2 2" /></Glyph>
          </StatusButton>
          <StatusButton $w={26} aria-label="Next view">
            <Glyph w={17} color="#b5b5b5"><path d="M.5 8V.5h11.500v4M4.500 5.500h12v11h-8M4.500 5.500v5M0 13.500h6M4 11.500l2 2-2 2" /></Glyph>
          </StatusButton>
        </StatusGroup>
        <StatusGroup $end>
          <StatusButton $w={24} $on aria-label="Single page">
            <Glyph w={14} h={16}><path d="M.5.5h13v14H.5zM3 4.500h8M3 7.500h8M3 10.500h8" /></Glyph>
          </StatusButton>
          <StatusButton $w={32} aria-label="Continuous">
            <Glyph w={14} h={16} color="#b0b0b0"><path d="M.5.5h13v9H.5zM3 3.500h8M3 6.500h8M.5 16v-3.500h13V16M3 15h8" /></Glyph>
          </StatusButton>
          <StatusButton $w={24} aria-label="Facing">
            <Glyph w={16} color="#b0b0b0"><path d="M.5.5h7v14h-7zM7.500.5h7v14h-7zM2.500 4h3M2.500 7.500h3M2.500 11h3M9.500 4h3M9.500 7.500h3M9.500 11h3" /></Glyph>
          </StatusButton>
          <StatusButton $w={32} aria-label="Continuous facing">
            <Glyph w={16} color="#b0b0b0"><path d="M.5.5h7v9h-7zM7.500.5h7v9h-7zM2.500 3.500h3M2.500 6.500h3M9.500 3.500h3M9.500 6.500h3M.5 16v-3.500h7V16M7.500 12.500h7V16M2.500 15h3M9.500 15h3" /></Glyph>
          </StatusButton>
          <StatusButton $w={11} aria-label="Zoom out">
            <Glyph w={9} color="#555"><path strokeWidth="2" d="M0 4.500h8" /></Glyph>
          </StatusButton>
          <Slider type="range" aria-label="Zoom" min={0} max={100} defaultValue={35} />
          <StatusButton $w={12} aria-label="Zoom in">
            <Glyph w={9} color="#555"><path strokeWidth="2" d="M0 4.500h9M4.500 0v9" /></Glyph>
          </StatusButton>
          <SelectWrap $w={80}>
            <select aria-label="Zoom level"><option>73.80%</option></select>
            <Caret $tone="#a0a0a0" />
          </SelectWrap>
          <StatusButton $w={29} aria-label="Full screen">
            <Glyph w={14}>
              <path strokeWidth="1.400" d="M.7 4V.7H4M.7.7l4 4M10 .7h3.300V4M13.300.7l-4 4M.7 10v3.300H4M.7 13.300l4-4M10 13.300h3.300V10M13.300 13.300l-4-4" />
            </Glyph>
          </StatusButton>
        </StatusGroup>
      </StatusBar>

      <TaskBar>
        <TaskButton aria-label="Start"><StartLogo /></TaskButton>
        <SearchBox>
          <Glyph w={17}><circle cx="10.500" cy="6.500" r="5.500" /><path d="M6.500 10.500L.5 16.500" /></Glyph>
          <input aria-label="Search" placeholder="Type here to search" />
          <FolkFlowers />
        </SearchBox>
        <TaskButton aria-label="Task view">
          <Glyph w={17} h={16} color="#fff"><path d="M.5 0v2.500h10V0M.5 5.500h10v6H.5zM.5 16v-2.500h10V16M14.500 0v4M14.500 9v7M13 6.500h3" /></Glyph>
        </TaskButton>
        <TaskButton $lead={3} aria-label="File Explorer"><FolderIcon /><Running /></TaskButton>
        <TaskButton $lead={1} aria-label="Chrome"><ChromeIcon /></TaskButton>
        <TaskButton $lead={1} aria-label="Edge"><EdgeIcon /><Running /></TaskButton>
        <TaskButton $lead={1} aria-label="Outlook"><OutlookIcon /><Running /></TaskButton>
        <TaskButton $lead={1} aria-label="Word">
          <OfficeTile letter="W" tile="#185abd" shades={["#41a5ee", "#2b7cd3", "#185abd", "#103f91"]} /><Running $multi />
        </TaskButton>
        <TaskButton $lead={1} aria-label="PowerPoint">
          <OfficeTile round letter="P" tile="#c43e1c" shades={["#ed6c47", "#ff8f6b", "#d35230"]} />
        </TaskButton>
        <TaskButton $lead={1} aria-label="Excel">
          <OfficeTile letter="X" tile="#107c41" shades={["#33c481", "#21a366", "#107c41", "#185c37"]} />
        </TaskButton>
        <TaskButton $lead={1} aria-label="OneNote">
          <OfficeTile letter="N" tile="#7719aa" shades={["#ca64ea", "#c661e8", "#ae4bd5", "#9332bf"]} />
        </TaskButton>
        <TaskButton $lead={1} aria-label="Publisher">
          <OfficeTile letter="P" tile="#038387" shades={["#37c6d0", "#37c6d0", "#1a9ba1", "#026e72"]} />
        </TaskButton>
        <TaskButton $lead={1} aria-label="3CX"><ThreeCx /><Running /></TaskButton>
        <TaskButton $lead={1} $on aria-label="Foxit PDF Reader"><FoxitTile /><Running $full /></TaskButton>

        <Tray>
          <Weather>
            <NoStroke width="24" height="22" viewBox="0 0 24 22">
              <path fill="#f5c60f" stroke="#f5c60f" strokeWidth="3" strokeLinejoin="round" d="M12 2l10.500 18.500h-21z" />
              <path stroke="#5b4a07" strokeWidth="1.400" d="M6 12h6c3 0 3-4.500.5-4.500-1.500 0-2 1-2 1.800M5 15h11c3 0 3.500-3.500 1.500-3.800-1.300-.2-2 .8-1.800 1.600M9 17.800h4.500c1.800 0 1.500 2 .2 2" />
            </NoStroke>
            Wind warning
          </Weather>
          <TrayButton $w={12} aria-label="Show hidden icons">
            <Glyph w={12} h={8} color="#fff"><path d="M.5 7L6 1.500 11.500 7" /></Glyph>
          </TrayButton>
          <TrayButton $w={36} aria-label="Updates">
            <Glyph w={17} h={16} color="#fff">
              <path d="M.5 2.500h4M.5 2.500v11h9M6 2.500L15.500.5V8M5.500 8c0-3 3.500-4 5-2M10.800 3.500V6.300H8M10.800 8c-.3 2.500-3.500 3.300-5 1.500M5.500 12V9.300h2.800" />
              <circle cx="12.500" cy="12.500" r="3.500" fill="#2b74c8" stroke="#2b74c8" />
            </Glyph>
          </TrayButton>
          <TrayButton $w={16} aria-label="Network">
            <Glyph w={13} h={14} color="#fff">
              <path d="M.5 13C.5 6 5.500 1.500 12.500 1.500M3.800 13C3.800 8 7 5 12.500 5M7 13c0-3 2-5 5.500-5" />
              <circle cx="11" cy="12" r="1.600" fill="#fff" />
            </Glyph>
          </TrayButton>
          <TrayButton $w={28} aria-label="Volume">
            <Glyph w={16} h={14} color="#fff">
              <path d="M.5 5h2.500L7 1.500v11L3 9H.5zM9 5c.8 1 .8 3 0 4" />
              <path opacity=".6" d="M11 3.500c1.800 2 1.800 5 0 7M13.300 2c2.500 3 2.500 7 0 10" />
            </Glyph>
          </TrayButton>
          <Clock>14:28<br />15/04/2024</Clock>
          <Notice aria-label="Notifications, 16 new">
            <NoStroke width="17" height="16" viewBox="0 0 17 16">
              <path fill="#fff" d="M0 0h16v12H8l-4 4v-4H0z" />
              <path fill="#1b2841" d="M3 3h10v1.200H3zM3 6h10v1.200H3zM3 9h6v1.200H3z" />
            </NoStroke>
            <Badge>16</Badge>
          </Notice>
        </Tray>
      </TaskBar>
    </Shell>
  );
}
